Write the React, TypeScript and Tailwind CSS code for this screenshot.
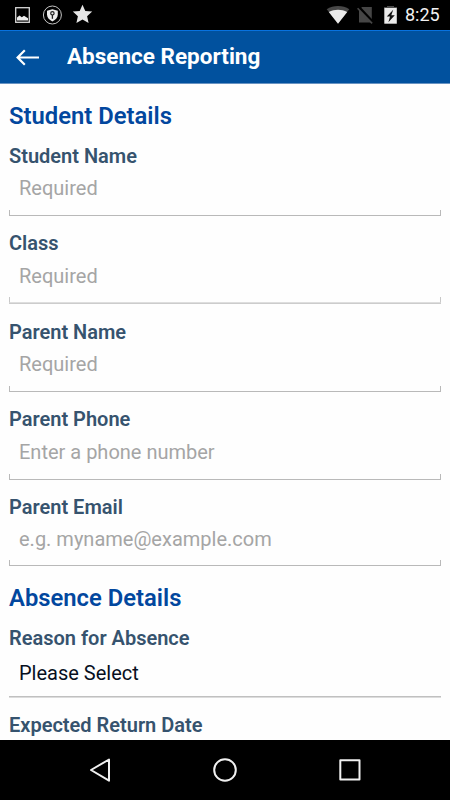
type FieldProps = { label: string; placeholder: string; className: string; inputGap?: string; line?: string };

function Field({ label, placeholder, className, inputGap = "mt-2", line = "border-[#b9b9b9]" }: FieldProps) {
  return (
    <label className={`flex flex-col ${className}`}>
      <span className="h-6 text-[20px] leading-6 font-semibold text-[#36536e]">{label}</span>
      <span className="flex grow flex-col justify-between">
        <input
          placeholder={placeholder}
          className={`${inputGap} ml-[10px] h-6 bg-transparent text-[20px] leading-6 text-black outline-none placeholder:text-[#a5a5a5]`}
        />
        <span className={`h-[6px] border border-t-0 ${line}`} />
      </span>
    </label>
  );
}

function StatusBar() {
  return (
    <div className="flex h-[30px] items-center bg-black">
      <svg width="110" height="30" viewBox="0 0 110 30">
        <rect x="15.7" y="7.7" width="13.6" height="14.6" fill="none" stroke="#d8d8d8" strokeWidth="1.3" />
        <path d="M17 20.5v-3l2.5-2 2.3 1.8 2.2-1.5 4 2.5v2.2z" fill="#eee" />
        <circle cx="52.4" cy="15" r="9" fill="none" stroke="#c4c4c4" strokeWidth="1" />
        <path d="M52.4 9.3l5.4 1.5v3.5c0 3.2-2 5.6-5.4 7.2-3.4-1.6-5.4-4-5.4-7.2v-3.5z" fill="#ededed" />
        <circle cx="52.4" cy="13.3" r="1.7" fill="#ededed" stroke="#222" strokeWidth="1.2" />
        <path d="M52.4 14.8v4" stroke="#222" strokeWidth="1.3" />
        <path d="M82.5 4.7l2.8 6.2 6.9.7-5.1 4.6 1.5 6.8-6.1-3.5-6.1 3.5 1.5-6.8-5.1-4.6 6.9-.7z" fill="#e6e6e6" />
      </svg>
      <svg className="ml-auto" width="80" height="30" viewBox="0 0 80 30">
        <path d="M6.7 9.2c6.5-4.4 16.2-4.4 22.6 0L18 23.7z" fill="#474747" />
        <path d="M8.8 12c5.6-2.9 12.8-2.9 18.4 0L18 23.7z" fill="#ebebeb" />
        <path d="M42 7h9.8v15.5H39V10z" fill="#464646" />
        <path d="M38.8 7.2l15 16" stroke="#000" strokeWidth="3" />
        <path d="M37.6 8.2l14.5 15.2" stroke="#464646" strokeWidth="1.6" />
        <path d="M64 8V7h3V6h7v1h3v1z" fill="#4c4c4c" />
        <path d="M64.3 8h12.5v15.7H64.3z" fill="#ebebeb" />
        <path d="M73.2 9.7L66.8 16.6h3.2l-1.6 5.6 6.4-7h-3.5z" fill="#111" />
      </svg>
      <span className="w-[50px] pl-[5px] text-[18px] leading-[32px] font-normal text-[#f2f2f2]">8:25</span>
    </div>
  );
}

export default function App() {
  return (
    <div className="flex h-[800px] w-[450px] flex-col overflow-hidden bg-white font-[Roboto,sans-serif]">
      <StatusBar />
      <header className="flex h-[54px] shrink-0 items-center border-t border-b border-t-[#0872df] border-b-[#6893c2] bg-[#01519e]">
        <svg className="ml-4 shrink-0" width="25" height="18" viewBox="0 0 25 18">
          <path d="M23 9.5H2M8.8 2.3L1.6 9.5l7.2 7.2" fill="none" stroke="#fff" strokeWidth="2.2" />
        </svg>
        <h1 className="mb-[2px] ml-[26px] text-[22.5px] leading-[50px] font-bold text-white">Absence Reporting</h1>
      </header>
      <main className="flex min-h-0 grow flex-col overflow-hidden bg-[#fefefe] px-[9px]">
        <h2 className="mt-[18px] h-[28px] text-[23.8px] leading-7 font-semibold text-[#02479e]">Student Details</h2>
        <Field label="Student Name" placeholder="Required" className="mt-[14px] h-[72px]" />
        <Field label="Class" placeholder="Required" className="mt-[15px] h-[72px]" inputGap="mt-[9px]" line="border-[#c8c8c8] border-b-[#dedede] shadow-[0_1px_0_#cccccc]" />
        <Field label="Parent Name" placeholder="Required" className="mt-[17px] h-[72px]" />
        <Field label="Parent Phone" placeholder="Enter a phone number" className="mt-[15px] h-[73px]" inputGap="mt-[9px]" />
        <Field label="Parent Email" placeholder="e.g. myname@example.com" className="mt-[15px] h-[71px]" />
        <h2 className="mt-[18px] h-[28px] shrink-0 text-[23.8px] leading-7 font-semibold text-[#02479e]">Absence Details</h2>
        <div className="mt-[14px] flex h-[71px] shrink-0 flex-col border-b border-[#c0c0c0] shadow-[0_1px_0_#dcdcdc]">
          <span className="text-[20px] leading-6 font-semibold text-[#36536e]">Reason for Absence</span>
          <span className="mt-[11px] pl-[10px] text-[20px] leading-6 text-[#07101f]">Please Select</span>
        </div>
        <span className="mt-4 h-6 shrink-0 text-[20px] leading-6 font-semibold text-[#36536e]">Expected Return Date</span>
      </main>
      <nav className="flex h-[60px] shrink-0 items-center bg-black">
        <svg width="450" height="60" viewBox="0 0 450 60" fill="none" stroke="#f0f0f0" strokeWidth="2" strokeLinejoin="round">
          <path d="M109 19.5v21.2L91 30z" />
          <circle cx="225" cy="30" r="10.8" />
          <rect x="340.3" y="20.3" width="19.2" height="19.2" />
        </svg>
      </nav>
    </div>
  );
}
